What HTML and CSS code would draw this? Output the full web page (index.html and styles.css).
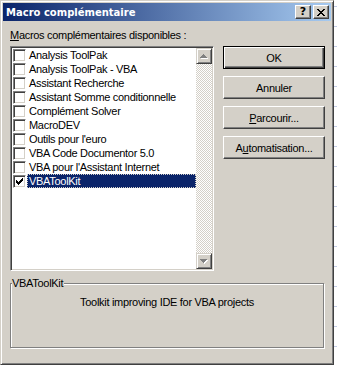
FILE: index.html
```html
<!DOCTYPE html>
<html lang="fr">
<head>
    <meta charset="UTF-8">
    <title>Macro complémentaire</title>
    <link rel="stylesheet" href="styles.css">
</head>
<body>
    <div class="window">
        <!-- barre de titre -->
        <div class="titlebar">
            <span class="title">Macro complémentaire</span>
            <div class="cap-buttons">
                <span class="cap-btn help">?</span>
                <span class="cap-btn">
                    <svg width="8" height="7" viewBox="0 0 8 7"><path fill="#000" d="M0 0h2v1H0z M6 0h2v1H6z M1 1h2v1H1z M5 1h2v1H5z M2 2h4v1H2z M3 3h2v1H3z M2 4h4v1H2z M1 5h2v1H1z M5 5h2v1H5z M0 6h2v1H0z M6 6h2v1H6z"/></svg>
                </span>
            </div>
        </div>

        <div class="client">
            <div class="caption"><u>M</u>acros complémentaires disponibles :</div>

            <div class="main">
                <!-- liste des macros -->
                <div class="listbox">
                    <ul class="items">
                        <li><span class="check"></span><span class="name">Analysis ToolPak</span></li>
                        <li><span class="check"></span><span class="name">Analysis ToolPak - VBA</span></li>
                        <li><span class="check"></span><span class="name">Assistant Recherche</span></li>
                        <li><span class="check"></span><span class="name">Assistant Somme conditionnelle</span></li>
                        <li><span class="check"></span><span class="name">Complément Solver</span></li>
                        <li><span class="check"></span><span class="name">MacroDEV</span></li>
                        <li><span class="check"></span><span class="name">Outils pour l'euro</span></li>
                        <li><span class="check"></span><span class="name">VBA Code Documentor 5.0</span></li>
                        <li><span class="check"></span><span class="name">VBA pour l'Assistant Internet</span></li>
                        <li class="selected">
                            <span class="check">
                                <svg width="7" height="7" viewBox="0 0 7 7"><path fill="#000" d="M6 0h1v1H6z M5 1h2v1H5z M0 2h1v1H0z M4 2h3v1H4z M0 3h2v1H0z M3 3h3v1H3z M0 4h5v1H0z M1 5h3v1H1z M2 6h1v1H2z"/></svg>
                            </span>
                            <span class="name">VBAToolKit</span>
                        </li>
                    </ul>
                    <div class="scrollbar">
                        <span class="sb-btn">
                            <svg width="8" height="5" viewBox="0 0 8 5"><path fill="#fff" d="M4 1h1v1H4z M3 2h3v1H3z M2 3h5v1H2z M1 4h7v1H1z"/><path fill="#808080" d="M3 0h1v1H3z M2 1h3v1H2z M1 2h5v1H1z M0 3h7v1H0z"/></svg>
                        </span>
                        <span class="sb-track"></span>
                        <span class="sb-btn">
                            <svg width="8" height="5" viewBox="0 0 8 5"><path fill="#fff" d="M1 1h7v1H1z M2 2h5v1H2z M3 3h3v1H3z M4 4h1v1H4z"/><path fill="#808080" d="M0 0h7v1H0z M1 1h5v1H1z M2 2h3v1H2z M3 3h1v1H3z"/></svg>
                        </span>
                    </div>
                </div>

                <!-- boutons -->
                <div class="buttons">
                    <button class="btn default">OK</button>
                    <button class="btn">Annuler</button>
                    <button class="btn"><u>P</u>arcourir...</button>
                    <button class="btn">A<u>u</u>tomatisation...</button>
                </div>
            </div>

            <fieldset class="group">
                <legend>VBAToolKit</legend>
                <p>Toolkit improving IDE for VBA projects</p>
            </fieldset>
        </div>
    </div>
</body>
</html>
```

FILE: styles.css
```css
body {
    margin: 0;
    font-family: "Liberation Sans", Arial, sans-serif;
    font-size: 11px;
    letter-spacing: -0.3px;
    color: #000;
    background: repeating-linear-gradient(to bottom, #fff 0 6px, #c4cde8 6px 7px, #fff 7px 20px);
}

/* fenêtre classique */
.window {
    width: 334px;
    height: 365px;
    box-sizing: border-box;
    background-color: #d4d0c8;
    border: 1px solid;
    border-color: #d4d0c8 #404040 #404040 #d4d0c8;
    box-shadow: inset 1px 1px #fff, inset -1px -1px #808080;
    padding: 2px;
    display: flex;
    flex-direction: column;
}

.titlebar {
    height: 18px;
    display: flex;
    align-items: center;
    padding: 0 2px 0 3px;
    background: linear-gradient(to right, #0a246a, #a6caf0);
}

.title {
    flex: 1;
    color: #fff;
    font-family: "DejaVu Sans", Verdana, sans-serif;
    font-weight: bold;
    font-size: 10px;
    letter-spacing: 0;
}

.cap-buttons {
    display: flex;
    gap: 2px;
}

.cap-btn {
    width: 16px;
    height: 14px;
    box-sizing: border-box;
    display: flex;
    align-items: center;
    justify-content: center;
    background-color: #d4d0c8;
    border: 1px solid;
    border-color: #fff #404040 #404040 #fff;
    box-shadow: inset -1px -1px #808080;
}

.cap-btn.help {
    font-family: "DejaVu Sans", sans-serif;
    font-weight: bold;
    font-size: 11px;
    line-height: 12px;
    letter-spacing: 0;
}

/* zone cliente */
.client {
    padding: 8px 0 0 7px;
}

.caption {
    height: 13px;
    line-height: 13px;
    margin-bottom: 4px;
}

.main {
    display: flex;
    gap: 9px;
}

.listbox {
    width: 204px;
    height: 225px;
    box-sizing: border-box;
    display: flex;
    background-color: #fff;
    border: 1px solid;
    border-color: #808080 #fff #fff #808080;
    box-shadow: inset 1px 1px #404040, inset -1px -1px #d4d0c8;
    padding: 1px;
}

.items {
    list-style: none;
    margin: 0;
    padding: 0;
    flex: 1;
}

.items li {
    height: 14px;
    display: flex;
    align-items: center;
    padding-left: 1px;
}

.check {
    width: 13px;
    height: 13px;
    box-sizing: border-box;
    display: flex;
    align-items: center;
    justify-content: center;
    background-color: #fff;
    border: 1px solid;
    border-color: #808080 #fff #fff #808080;
    box-shadow: inset 1px 1px #404040, inset -1px -1px #d4d0c8;
    margin-right: 1px;
}

.name {
    flex: 1;
    height: 14px;
    line-height: 14px;
    padding-left: 2px;
    white-space: nowrap;
}

.selected .name {
    background-color: #0a246a;
    color: #fff;
    outline: 1px dotted #d4d0c8;
    outline-offset: -1px;
}

.scrollbar {
    width: 16px;
    display: flex;
    flex-direction: column;
}

.sb-btn {
    height: 16px;
    box-sizing: border-box;
    display: flex;
    align-items: center;
    justify-content: center;
    background-color: #d4d0c8;
    border: 1px solid;
    border-color: #d4d0c8 #404040 #404040 #d4d0c8;
    box-shadow: inset 1px 1px #fff, inset -1px -1px #808080;
}

.sb-track {
    flex: 1;
    background-image: conic-gradient(#fff 25%, #d4d0c8 0 50%, #fff 0 75%, #d4d0c8 0);
    background-size: 2px 2px;
}

/* boutons */
.buttons {
    width: 102px;
    display: flex;
    flex-direction: column;
    gap: 7px;
}

.btn {
    height: 23px;
    box-sizing: border-box;
    font-family: "Liberation Sans", Arial, sans-serif;
    font-size: 11px;
    letter-spacing: -0.3px;
    color: #000;
    background-color: #d4d0c8;
    border: 1px solid;
    border-color: #fff #404040 #404040 #fff;
    box-shadow: inset -1px -1px #808080;
    padding: 0;
}

.btn.default {
    border-color: #000;
    box-shadow: inset 1px 1px #fff, inset -1px -1px #404040, inset -2px -2px #808080;
}

/* cadre de description */
.group {
    width: 314px;
    height: 71px;
    box-sizing: border-box;
    margin: 6px 0 0 0;
    padding: 0;
    border: 1px solid #808080;
    box-shadow: inset 1px 1px #fff, 1px 1px #fff;
}

.group legend {
    margin-left: 1px;
    padding: 0 1px 0 0;
    line-height: 13px;
    background-color: #d4d0c8;
}

.group p {
    margin: 6px 0 0 0;
    text-align: center;
    line-height: 13px;
}
```
